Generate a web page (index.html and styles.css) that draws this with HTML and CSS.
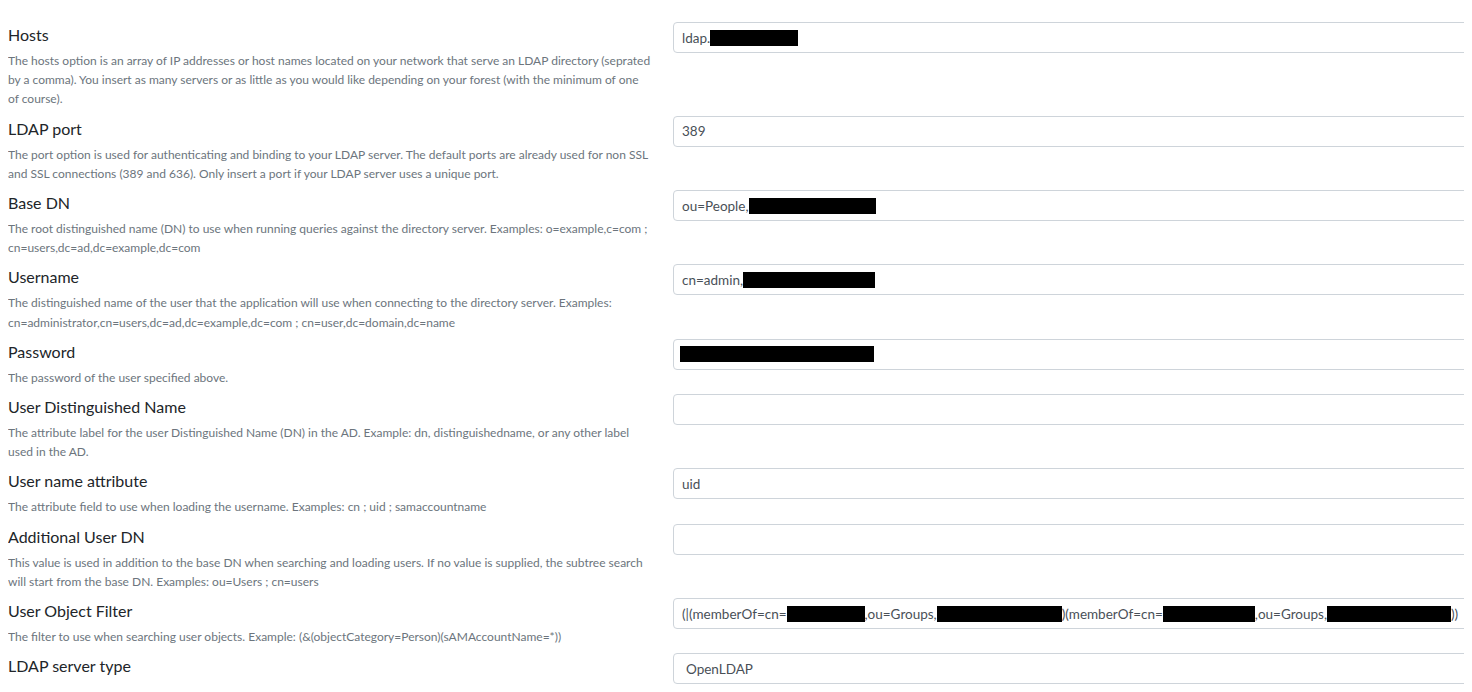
FILE: index.html
```html
<!DOCTYPE html>
<html lang="en">
<head>
<meta charset="utf-8">
<title>LDAP settings</title>
<link rel="stylesheet" href="styles.css">
</head>
<body>
<form class="settings">
  <div class="field">
    <div class="field-text">
      <label class="field-label">Hosts</label>
      <p class="field-help">The hosts option is an array of IP addresses or host names located on your network that serve an LDAP directory (seprated by a comma). You insert as many servers or as little as you would like depending on your forest (with the minimum of one<br>of course).</p>
    </div>
    <div class="field-control"><div class="input">ldap.<span class="redact w88"></span></div></div>
  </div>

  <div class="field">
    <div class="field-text">
      <label class="field-label">LDAP port</label>
      <p class="field-help">The port option is used for authenticating and binding to your LDAP server. The default ports are already used for non SSL and SSL connections (389 and 636). Only insert a port if your LDAP server uses a unique port.</p>
    </div>
    <div class="field-control"><div class="input">389</div></div>
  </div>

  <div class="field">
    <div class="field-text">
      <label class="field-label">Base DN</label>
      <p class="field-help">The root distinguished name (DN) to use when running queries against the directory server. Examples: o=example,c=com ; cn=users,dc=ad,dc=example,dc=com</p>
    </div>
    <div class="field-control"><div class="input">ou=People,<span class="redact w127"></span></div></div>
  </div>

  <div class="field">
    <div class="field-text">
      <label class="field-label">Username</label>
      <p class="field-help">The distinguished name of the user that the application will use when connecting to the directory server. Examples: cn=administrator,cn=users,dc=ad,dc=example,dc=com ; cn=user,dc=domain,dc=name</p>
    </div>
    <div class="field-control"><div class="input">cn=admin,<span class="redact w132"></span></div></div>
  </div>

  <div class="field">
    <div class="field-text">
      <label class="field-label">Password</label>
      <p class="field-help">The password of the user specified above.</p>
    </div>
    <div class="field-control"><div class="input input-password"><span class="redact w194"></span></div></div>
  </div>

  <div class="field">
    <div class="field-text">
      <label class="field-label">User Distinguished Name</label>
      <p class="field-help">The attribute label for the user Distinguished Name (DN) in the AD. Example: dn, distinguishedname, or any other label<br>used in the AD.</p>
    </div>
    <div class="field-control"><div class="input"></div></div>
  </div>

  <div class="field">
    <div class="field-text">
      <label class="field-label">User name attribute</label>
      <p class="field-help">The attribute field to use when loading the username. Examples: cn ; uid ; samaccountname</p>
    </div>
    <div class="field-control"><div class="input">uid</div></div>
  </div>

  <div class="field">
    <div class="field-text">
      <label class="field-label">Additional User DN</label>
      <p class="field-help">This value is used in addition to the base DN when searching and loading users. If no value is supplied, the subtree search will start from the base DN. Examples: ou=Users ; cn=users</p>
    </div>
    <div class="field-control"><div class="input"></div></div>
  </div>

  <div class="field">
    <div class="field-text">
      <label class="field-label">User Object Filter</label>
      <p class="field-help">The filter to use when searching user objects. Example: (&amp;(objectCategory=Person)(sAMAccountName=*))</p>
    </div>
    <div class="field-control"><div class="input">(|(memberOf=cn=<span class="redact w78"></span>,ou=Groups,<span class="redact w125"></span>)(memberOf=cn=<span class="redact w92"></span>,ou=Groups,<span class="redact w124"></span>))</div></div>
  </div>

  <div class="field">
    <div class="field-text">
      <label class="field-label">LDAP server type</label>
    </div>
    <div class="field-control"><div class="input select">OpenLDAP</div></div>
  </div>
</form>
</body>
</html>
```

FILE: styles.css
```css
html {
  overflow: hidden;
}

body {
  margin: 8px;
  background: #ffffff;
  font-family: Lato, "Open Sans", sans-serif;
  color: #212529;
}

.settings {
  padding-top: 14px;
}

.field {
  display: grid;
  grid-template-columns: 651px 820px;
  column-gap: 14px;
  padding-bottom: 7px;
}

.field-text {
  min-width: 0;
}

.field-label {
  display: block;
  margin-top: 1px;
  font-size: 16px;
  line-height: 24px;
  color: #212529;
}

.field-help {
  margin: 4px 0 0;
  font-size: 12px;
  line-height: 19.2px;
  color: #6c757d;
}

.input {
  box-sizing: border-box;
  height: 31px;
  display: flex;
  align-items: center;
  padding: 0 8px;
  border: 1px solid #ced4da;
  border-radius: 4px;
  background: #ffffff;
  font-size: 13.5px;
  color: #495057;
  white-space: nowrap;
}

.input-password {
  padding-left: 6px;
}

.select {
  padding-left: 12px;
}

.redact {
  display: inline-block;
  height: 16px;
  background: #000000;
}

.w78 { width: 78px; }
.w88 { width: 88px; }
.w92 { width: 92px; }
.w124 { width: 124px; }
.w125 { width: 125px; }
.w127 { width: 127px; }
.w132 { width: 132px; }
.w194 { width: 194px; }
```
